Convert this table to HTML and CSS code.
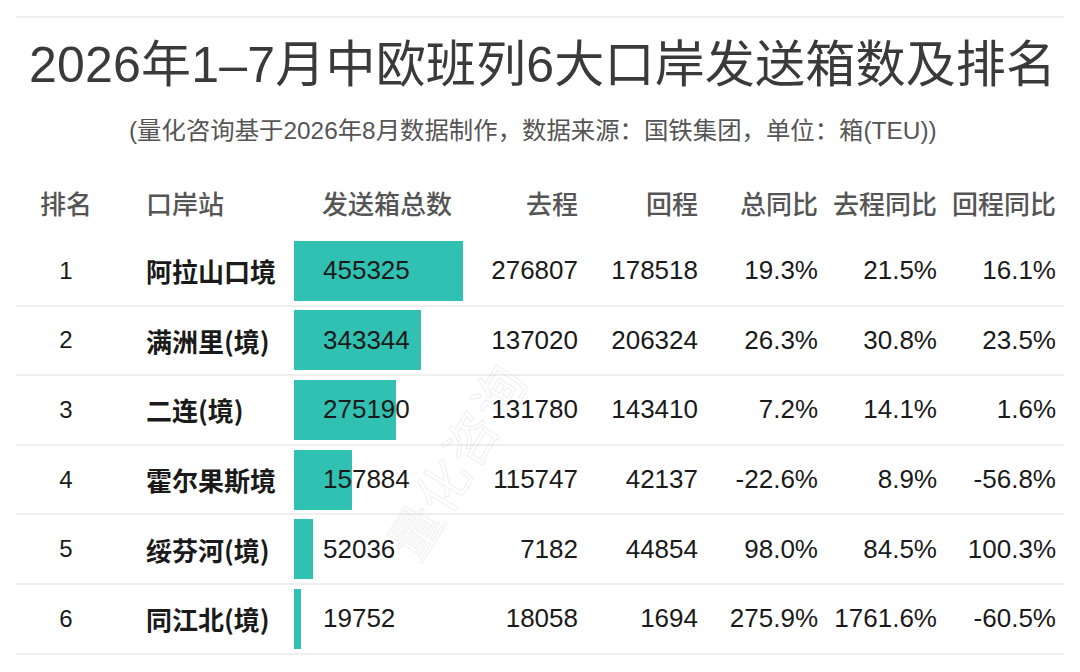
FILE: index.html
```html
<!DOCTYPE html>
<html lang="zh-CN">
<head>
<meta charset="utf-8">
<title>2026年1–7月中欧班列6大口岸发送箱数及排名</title>
<link rel="stylesheet" href="styles.css">
</head>
<body>
<div class="page">
  <div class="topline"></div>
  <h1 class="title">2026年1–7月中欧班列6大口岸发送箱数及排名</h1>
  <p class="subtitle">(量化咨询基于2026年8月数据制作，数据来源：国铁集团，单位：箱(TEU))</p>
  <div class="table">
    <div class="row head">
      <div class="c-rank">排名</div>
      <div class="c-name">口岸站</div>
      <div class="c-total">发送箱总数</div>
      <div class="c-num">去程</div>
      <div class="c-num">回程</div>
      <div class="c-num">总同比</div>
      <div class="c-num">去程同比</div>
      <div class="c-num">回程同比</div>
    </div>
    <div class="row">
      <div class="c-rank">1</div>
      <div class="c-name">阿拉山口境</div>
      <div class="c-total"><span class="bar" style="width:169px"></span><span class="val">455325</span></div>
      <div class="c-num">276807</div>
      <div class="c-num">178518</div>
      <div class="c-num">19.3%</div>
      <div class="c-num">21.5%</div>
      <div class="c-num">16.1%</div>
    </div>
    <div class="row">
      <div class="c-rank">2</div>
      <div class="c-name">满洲里(境)</div>
      <div class="c-total"><span class="bar" style="width:127px"></span><span class="val">343344</span></div>
      <div class="c-num">137020</div>
      <div class="c-num">206324</div>
      <div class="c-num">26.3%</div>
      <div class="c-num">30.8%</div>
      <div class="c-num">23.5%</div>
    </div>
    <div class="row">
      <div class="c-rank">3</div>
      <div class="c-name">二连(境)</div>
      <div class="c-total"><span class="bar" style="width:102px"></span><span class="val">275190</span></div>
      <div class="c-num">131780</div>
      <div class="c-num">143410</div>
      <div class="c-num">7.2%</div>
      <div class="c-num">14.1%</div>
      <div class="c-num">1.6%</div>
    </div>
    <div class="row">
      <div class="c-rank">4</div>
      <div class="c-name">霍尔果斯境</div>
      <div class="c-total"><span class="bar" style="width:58px"></span><span class="val">157884</span></div>
      <div class="c-num">115747</div>
      <div class="c-num">42137</div>
      <div class="c-num">-22.6%</div>
      <div class="c-num">8.9%</div>
      <div class="c-num">-56.8%</div>
    </div>
    <div class="row">
      <div class="c-rank">5</div>
      <div class="c-name">绥芬河(境)</div>
      <div class="c-total"><span class="bar" style="width:19px"></span><span class="val">52036</span></div>
      <div class="c-num">7182</div>
      <div class="c-num">44854</div>
      <div class="c-num">98.0%</div>
      <div class="c-num">84.5%</div>
      <div class="c-num">100.3%</div>
    </div>
    <div class="row">
      <div class="c-rank">6</div>
      <div class="c-name">同江北(境)</div>
      <div class="c-total"><span class="bar" style="width:7px"></span><span class="val">19752</span></div>
      <div class="c-num">18058</div>
      <div class="c-num">1694</div>
      <div class="c-num">275.9%</div>
      <div class="c-num">1761.6%</div>
      <div class="c-num">-60.5%</div>
    </div>
    <div class="watermark">量化咨询</div>
  </div>
</div>
</body>
</html>
```

FILE: styles.css
```css
html, body {
  margin: 0;
  padding: 0;
  background: #ffffff;
}

body {
  font-family: "Liberation Sans", "Noto Sans CJK SC", sans-serif;
  color: #1a1a1a;
}

.page {
  width: 1048px;
  padding: 16px 16px 0;
}

.topline {
  height: 2px;
  background: #efefef;
}

.title {
  margin: 17px 0 0;
  padding-left: 13px;
  font-size: 50px;
  line-height: 60px;
  font-weight: 400;
  letter-spacing: 0.2px;
  color: #3a3a3a;
  white-space: nowrap;
}

.subtitle {
  margin: 20px 0 0;
  padding-left: 113px;
  font-size: 24.4px;
  line-height: 32px;
  color: #555555;
  white-space: nowrap;
}

.table {
  position: relative;
  margin-top: 26px;
}

.row {
  display: grid;
  grid-template-columns: 100px 178px 176px 108px 120px 120px 119px 119px;
  padding-right: 8px;
  height: 69.6px;
  box-sizing: border-box;
  border-bottom: 2px solid #efefef;
  align-items: center;
  font-size: 26px;
}

.row.head {
  height: 64px;
  padding-bottom: 6px;
  border-bottom: none;
  font-family: "Noto Sans CJK SC", sans-serif;
  font-weight: 500;
  color: #555555;
}

.c-rank {
  text-align: center;
  font-size: 24px;
}

.head .c-rank {
  font-size: 26px;
}

.c-name {
  padding-left: 30px;
  font-family: "Noto Sans CJK SC", sans-serif;
  font-weight: 700;
  white-space: nowrap;
}

.head .c-name {
  font-weight: 500;
}

.c-total {
  display: grid;
  align-items: center;
  height: 100%;
}

.head .c-total {
  display: block;
  height: auto;
  padding-left: 28px;
}

.bar {
  grid-area: 1 / 1;
  justify-self: start;
  height: 60px;
  background: #30c1b2;
}

.val {
  grid-area: 1 / 1;
  padding-left: 29px;
  position: relative;
}

.c-num {
  text-align: right;
  white-space: nowrap;
}

.watermark {
  position: absolute;
  left: 439px;
  top: 287px;
  transform: translate(-50%, -50%) rotate(-59deg);
  font-family: "Noto Sans CJK SC", sans-serif;
  font-size: 52px;
  letter-spacing: 2px;
  color: transparent;
  -webkit-text-stroke: 1px rgba(0, 0, 0, 0.07);
  white-space: nowrap;
  pointer-events: none;
}
```
